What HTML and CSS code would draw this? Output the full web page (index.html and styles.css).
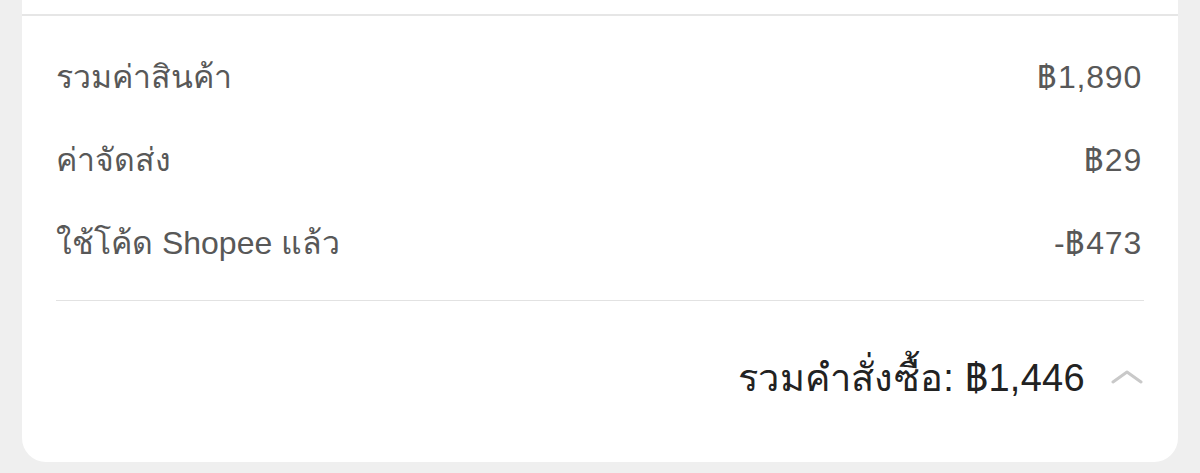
FILE: index.html
```html
<!DOCTYPE html>
<html lang="th">

<head>
    <meta charset="UTF-8" />
    <meta name="viewport" content="width=device-width, initial-scale=1" />
    <title>Order Summary</title>
    <link rel="stylesheet" href="styles.css">
</head>

<body>
    <div class="card">
        <div class="card-top"></div>

        <div class="summary">
            <div class="row">
                <span class="label">รวมค่าสินค้า</span>
                <span class="value">฿1,890</span>
            </div>
            <div class="row">
                <span class="label">ค่าจัดส่ง</span>
                <span class="value">฿29</span>
            </div>
            <div class="row">
                <span class="label">ใช้โค้ด Shopee แล้ว</span>
                <span class="value">-฿473</span>
            </div>
        </div>

        <div class="total">
            <span class="total-text">รวมคำสั่งซื้อ: <b>฿1,446</b></span>
            <svg class="chevron" width="32" height="14" viewBox="0 0 32 14">
                <path d="M2 12 L16 2 L30 12" fill="none" stroke="#c9c9c9" stroke-width="3" stroke-linecap="round" stroke-linejoin="round" />
            </svg>
        </div>
    </div>
</body>

</html>
```

FILE: styles.css
```css
body {
    margin: 0;
    background-color: #efefef;
    font-family: "Liberation Sans", "Noto Sans", sans-serif;
}

.card {
    margin-left: 22px;
    width: 1156px;
    height: 462px;
    background-color: #fff;
    border-radius: 0 0 24px 24px;
    box-sizing: border-box;
}

.card-top {
    height: 14px;
    border-bottom: 2px solid #e6e6e6;
}

.summary {
    margin: 0 34px;
    padding-top: 19px;
    padding-bottom: 16px;
    border-bottom: 1px solid #e2e2e2;
}

.row {
    display: flex;
    justify-content: space-between;
    align-items: center;
    height: 83px;
    font-size: 32px;
    color: #585858;
}

.value {
    margin-right: 2px;
    letter-spacing: 0.8px;
}

.total {
    display: flex;
    justify-content: flex-end;
    align-items: center;
    gap: 26px;
    margin: 0 35px 0 34px;
    height: 152px;
}

.total-text {
    font-size: 38px;
    color: #222;
    letter-spacing: 0.3px;
}

.total-text b {
    font-weight: 400;
}

.chevron {
    display: block;
}
```
